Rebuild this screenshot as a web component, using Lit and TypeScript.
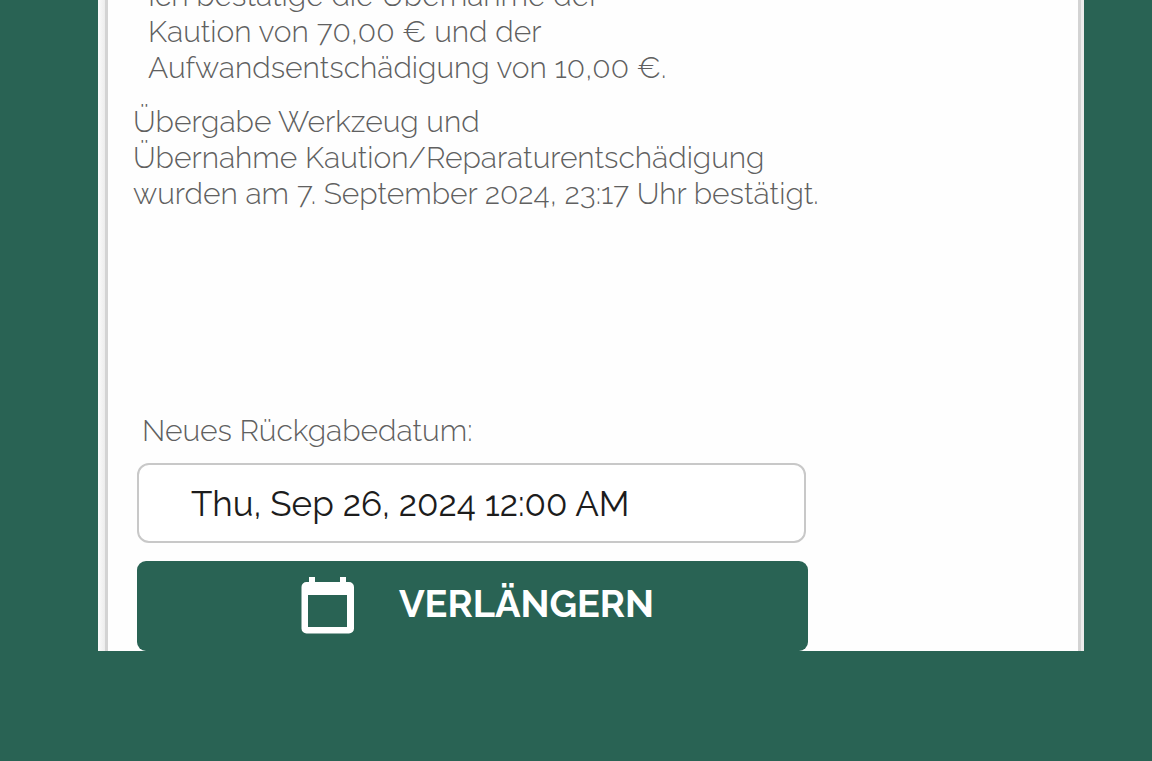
import { LitElement, html, css } from "lit";
import { customElement, state } from "lit/decorators.js";

@customElement("app-root")
export class AppRoot extends LitElement {
  static styles = css`
    :host {
      display: block;
      box-sizing: border-box;
      min-height: 100vh;
      padding: 0 68px 110px 98px;
      background: #296354;
      color: #606060;
      font-family: Raleway, Lato, "Open Sans", sans-serif;
      font-size: 30px;
      font-weight: 300;
      line-height: 36px;
    }
    .viewport {
      overflow: hidden;
      padding: 0 3px 0 7px;
      background: linear-gradient(to right, #fbfbfb, #ececec 7px, #ececec);
    }
    .card {
      box-sizing: border-box;
      margin-top: -22px;
      padding: 0 25px;
      background: #fefefe;
      border: solid #d3d3d3;
      border-width: 0 3px;
    }
    p {
      margin: 0;
    }
    .terms {
      padding-left: 15px;
    }
    .confirmation {
      margin-top: 18px;
    }
    .extend {
      display: flex;
      flex-direction: column;
      max-width: 671px;
      margin: 201px 0 0 4px;
    }
    label {
      padding-left: 5px;
    }
    input {
      box-sizing: border-box;
      height: 80px;
      margin: 14px 2px 18px 0;
      padding: 0 52px;
      border: 2px solid #c8c8c8;
      border-radius: 12px;
      background: #fff;
      color: #1c1c1c;
      font: inherit;
      font-size: 35px;
      font-weight: 400;
    }
    button {
      display: flex;
      align-items: center;
      justify-content: center;
      gap: 44px;
      width: 100%;
      height: 90px;
      padding: 0 0 0 10px;
      border: 0;
      border-radius: 9px;
      background: #296354;
      color: #fff;
      font: inherit;
      font-size: 38px;
      font-weight: 700;
      text-transform: uppercase;
    }
    .caption {
      padding-bottom: 4px;
    }
    svg {
      width: 54px;
      height: 58px;
      fill: currentColor;
    }
  `;

  @state() private returnDate = "Thu, Sep 26, 2024 12:00 AM";

  private updateDate(event: Event) {
    this.returnDate = (event.target as HTMLInputElement).value;
  }

  render() {
    return html`
      <main class="viewport">
        <section class="card">
          <p class="terms">
            Ich bestätige die Übernahme der<br />Kaution von 70,00 € und der<br />Aufwandsentschädigung
            von 10,00 €.
          </p>
          <p class="confirmation">
            Übergabe Werkzeug und<br />Übernahme Kaution/Reparaturentschädigung<br />wurden
            am 7. September 2024, 23:17 Uhr bestätigt.
          </p>
          <form class="extend" @submit=${(e: Event) => e.preventDefault()}>
            <label for="return-date">Neues Rückgabedatum:</label>
            <input
              id="return-date"
              type="text"
              .value=${this.returnDate}
              @input=${this.updateDate}
            />
            <button type="submit">
              <svg viewBox="0 0 54 58" aria-hidden="true">
                <path
                  fill-rule="evenodd"
                  d="M8 0h6v5h25V0h6v5h3a5 5 0 0 1 5 5v41.5a5 5 0 0 1-5 5H5.500a5 5 0 0 1-5-5V10a5 5 0 0 1 5-5H8zM7 18v32h39V18z"
                />
              </svg>
              <span class="caption">Verlängern</span>
            </button>
          </form>
        </section>
      </main>
    `;
  }
}
